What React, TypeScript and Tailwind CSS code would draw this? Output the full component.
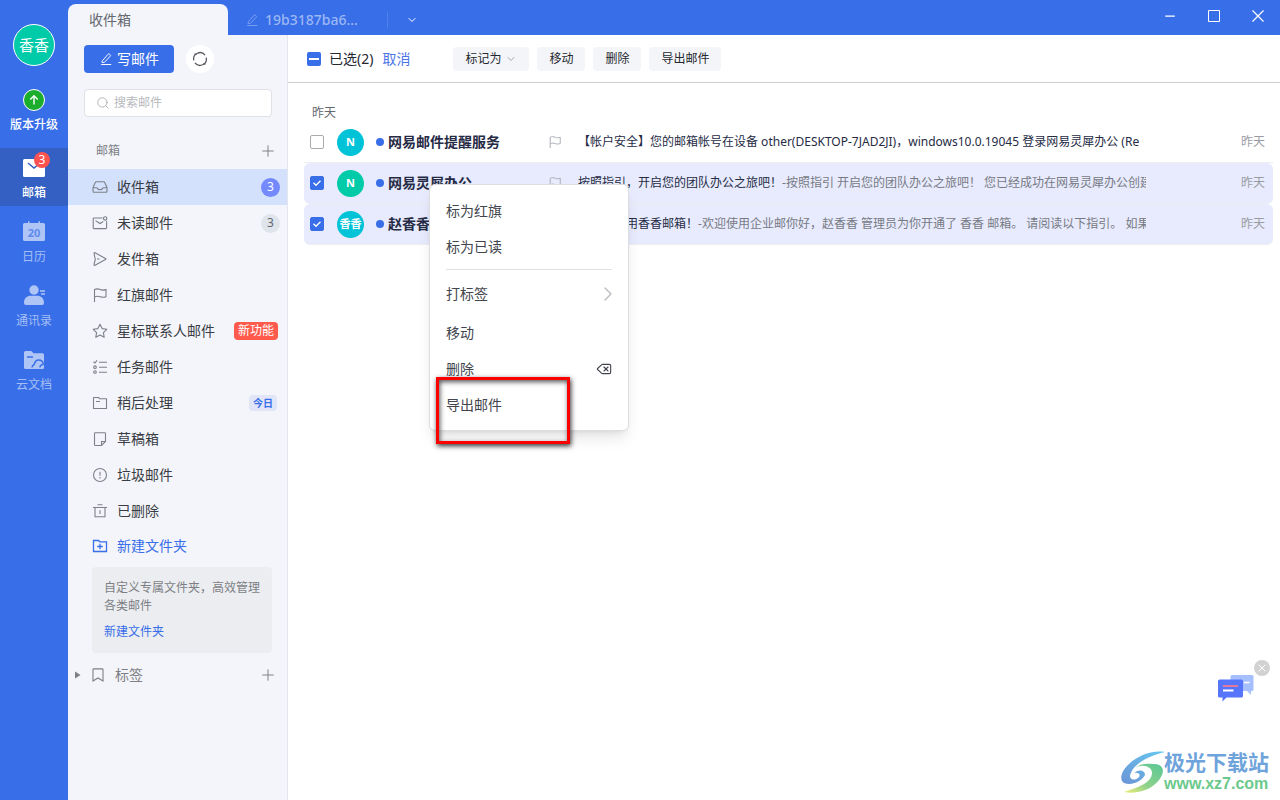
import { useState, type ReactNode } from "react";
import { ChevronDown, ChevronRight, Plus, X, Minus, Search, Delete } from "lucide-react";

type IconProps = { className?: string };

function Line({ className = "size-4", children }: IconProps & { children: ReactNode }) {
  return (
    <svg
      viewBox="0 0 16 16"
      className={`shrink-0 ${className}`}
      fill="none"
      stroke="currentColor"
      strokeWidth="1.1"
      aria-hidden="true"
    >
      {children}
    </svg>
  );
}

const PenIcon = ({ className }: IconProps) => (
  <Line className={className}>
    <path d="M3.5 10.5 10.3 2.6a1.2 1.2 0 0 1 1.8 0l.6.5a1.2 1.2 0 0 1 0 1.8L6 12H3.5zM2.5 14.3h11.5" />
  </Line>
);

const FlagIcon = ({ className }: IconProps) => (
  <Line className={className}>
    <path d="M2.5 15V2.6c2-1 4-.8 5.800 0s3.600.6 5.700 0v7.200c-2.100.7-4 .7-5.800 0s-3.700-.8-5.700.2" />
  </Line>
);

const icons: Record<string, ReactNode> = {
  inbox: (
    <Line>
      <path d="M1 8.700 3.200 3.500Q3.500 2.700 4.500 2.700h7q1 0 1.300.8L15 8.700v3.600q0 1-1 1H2q-1 0-1-1zM1 8.700h3.600q.5 0 .7.500.6 1.500 2.700 1.500t2.700-1.500q.2-.5.7-.5H15" />
    </Line>
  ),
  unread: (
    <Line>
      <path d="M10.500 3H2q-.8 0-.8.800v9q0 .8.800.8h11.800q.8 0 .8-.8V6.300M3.500 5.600 8 8.500l3.200-2" />
      <circle cx="13.200" cy="3.400" r="1.700" />
    </Line>
  ),
  sent: (
    <Line>
      <path d="M2 2.300q0-1 1-.5l10.500 5.600q1 .6 0 1.100L3 14.200q-1 .5-1-.5l1.300-5.200zM5 8h2.500" strokeLinejoin="round" />
    </Line>
  ),
  flag: <FlagIcon />,
  star: (
    <Line>
      <path d="m8 1.300 2.100 4.300 4.700.7-3.400 3.300.8 4.700L8 12l-4.200 2.300.8-4.700L1.200 6.300l4.700-.7z" strokeLinejoin="round" />
    </Line>
  ),
  task: (
    <Line>
      <path d="M7 3.200h8M7 8.200h8M7 13.200h8M1.500 2.800 3 4l2-2.700" />
      <circle cx="3" cy="8.200" r="1.300" />
      <circle cx="3" cy="13" r="1.300" />
    </Line>
  ),
  later: (
    <Line>
      <path d="M1.500 13.500v-11h5l1.300 1.300h6.700v9.700zM4 6.500h4" strokeLinejoin="round" />
    </Line>
  ),
  draft: (
    <Line>
      <path d="M9.500 14.500H3.300q-.8 0-.8-.8V2.500q0-.8.800-.8h9.400q.8 0 .8.800v8zM9.500 14.500v-4h4" />
    </Line>
  ),
  spam: (
    <Line>
      <circle cx="8" cy="8" r="6.500" />
      <path d="M8 4.700v4.100M8 9.900v1.500" />
    </Line>
  ),
  trash: (
    <Line>
      <path d="M1 4.500h14M5.500 1.700h5M3 4.500v9.300h10V4.500M8 7.300v3.600" />
    </Line>
  ),
  newFolder: (
    <Line>
      <path d="M1.500 13.500v-11h5l1.300 1.300h6.700v9.700zM8 5.700v5.600M5.200 8.500h5.600" strokeWidth="1.3" />
    </Line>
  ),
  bookmark: (
    <Line>
      <path d="M3 14V2.700q0-.8.800-.8h8.400q.8 0 .8.800V14l-5-3z" />
    </Line>
  ),
};

interface Folder {
  icon: string;
  label: string;
  count?: number;
  tag?: "new" | "today";
}

const folders: Folder[] = [
  { icon: "inbox", label: "收件箱", count: 3 },
  { icon: "unread", label: "未读邮件", count: 3 },
  { icon: "sent", label: "发件箱" },
  { icon: "flag", label: "红旗邮件" },
  { icon: "star", label: "星标联系人邮件", tag: "new" },
  { icon: "task", label: "任务邮件" },
  { icon: "later", label: "稍后处理", tag: "today" },
  { icon: "draft", label: "草稿箱" },
  { icon: "spam", label: "垃圾邮件" },
  { icon: "trash", label: "已删除" },
];

const mails = [
  {
    avatar: "N",
    color: "bg-[#00c3d7]",
    sender: "网易邮件提醒服务",
    subject: "【帐户安全】您的邮箱帐号在设备 other(DESKTOP-7JAD2JI)，windows10.0.19045 登录网易灵犀办公 (Re",
    preview: "",
  },
  {
    avatar: "N",
    color: "bg-[#00cba8]",
    sender: "网易灵犀办公",
    subject: "按照指引，开启您的团队办公之旅吧！",
    preview: "-按照指引 开启您的团队办公之旅吧！ 您已经成功在网易灵犀办公创建",
  },
  {
    avatar: "香香",
    color: "bg-[#00c3d7]",
    sender: "赵香香",
    subject: "欢迎您使用香香邮箱！",
    preview: "-欢迎使用企业邮你好，赵香香 管理员为你开通了 香香 邮箱。 请阅读以下指引。 如果",
  },
];

function RailItem({ label, active, children }: { label: string; active?: boolean; children: ReactNode }) {
  return (
    <button
      className={`flex h-[58px] w-full flex-col items-center pt-2 text-[12px] leading-4 ${
        active ? "bg-[#345fc3] font-medium text-white" : "text-[#a5bff5]"
      }`}
    >
      <span className="relative mb-[7px] block">{children}</span>
      {label}
    </button>
  );
}

function Rail() {
  return (
    <nav className="flex w-[68px] shrink-0 flex-col items-center bg-[#386ee8]">
      <button className="mt-6 size-[42px] rounded-full border border-white bg-[#00cba8] text-[15px] text-white">
        香香
      </button>
      <button className="mt-[23px] flex flex-col items-center text-[12px] font-medium leading-4 text-white">
        <svg viewBox="0 0 22 22" className="mb-1.5 size-[22px]" aria-hidden="true">
          <circle cx="11" cy="11" r="10.500" fill="#1bad2c" stroke="#fff" />
          <path d="M11 15.500V7M7.300 10.500 11 6.800l3.700 3.700" fill="none" stroke="#fff" strokeWidth="1.400" />
        </svg>
        版本升级
      </button>
      <div className="mt-[15px] flex w-full flex-col gap-1.5">
        <RailItem label="邮箱" active>
          <svg viewBox="0 0 22 22" className="size-[22px]" aria-hidden="true">
            <rect y="3" width="22" height="18" rx="1.500" fill="#fff" />
            <path d="m5 7 6 5 6-5" fill="none" stroke="#345fc3" strokeWidth="1.500" />
          </svg>
          <span className="absolute -top-1 left-[11px] flex size-4 items-center justify-center rounded-full bg-[#fc5250] text-[12px] font-normal">
            3
          </span>
        </RailItem>
        <RailItem label="日历">
          <svg viewBox="0 0 22 22" className="size-[22px]" aria-hidden="true">
            <path d="M1.500 3H5V1.300h1.500V3h9V1.300H17V3h3.500Q22 3 22 4.500v15q0 1.500-1.500 1.500h-19Q0 21 0 19.500v-15Q0 3 1.500 3" fill="#afc5f6" />
            <text x="11" y="16.500" textAnchor="middle" fontSize="11" fontWeight="700" fill="#5f8bee">20</text>
          </svg>
        </RailItem>
        <RailItem label="通讯录">
          <svg viewBox="0 0 22 22" className="size-[22px]" fill="#afc5f6" aria-hidden="true">
            <circle cx="11" cy="6" r="4.700" />
            <path d="M1 19c0-5 3-7.200 7-7.200h6c4 0 7 2.200 7 7.200q0 2-2 2H3q-2 0-2-2M17 6.300h5v1.400h-5zM18 9.300h4v1.400h-4z" />
          </svg>
        </RailItem>
        <RailItem label="云文档">
          <svg viewBox="0 0 22 22" className="size-[22px]" aria-hidden="true">
            <path d="M1 4.500Q1 3 2.500 3h5.800l2.200 2.300h9Q21 5.300 21 6.800v12.700q0 1.500-1.500 1.500h-17Q1 21 1 19.500z" fill="#afc5f6" />
            <path d="M4 9h6" stroke="#386ee8" strokeWidth="1.500" />
            <path d="M9 19.500c0-1.500.8-2.500 2.200-3 .6-2.700 2.300-4.500 4.500-4.500 2.400 0 4.300 1.700 4.800 4.500M17 19.500c0-1.800 1.200-3 3.500-3" fill="none" stroke="#386ee8" strokeWidth="1.400" />
          </svg>
        </RailItem>
      </div>
    </nav>
  );
}

function TitleBar() {
  return (
    <header className="flex h-[35px] shrink-0 items-end bg-[#386ee8]">
      <button className="h-[31px] w-40 rounded-t-lg bg-[#f3f5fa] pl-[21px] text-left text-[14px] text-[#65686f]">
        收件箱
      </button>
      <div className="flex h-[31px] items-center">
        <button className="flex w-[159px] items-center pl-[17px] text-[14px] text-[#9bb7f4]">
          <PenIcon className="mr-1.5 size-[14px] text-[#7ba0f0]" />
          <span className="font-medium">19b3187ba6...</span>
        </button>
        <span className="h-4 w-px bg-[#4f80eb]" />
        <button aria-label="更多标签页" className="ml-[18px] text-white">
          <ChevronDown className="size-3" />
        </button>
      </div>
      <div className="ml-auto flex h-full items-center gap-8 pb-1 pr-4 text-white">
        <button aria-label="最小化"><Minus className="size-3 scale-125" strokeWidth={2} /></button>
        <button aria-label="最大化">
          <svg viewBox="0 0 12 12" className="size-3" fill="none" stroke="currentColor" aria-hidden="true">
            <path d="M.5.5h11v11H.5z" />
          </svg>
        </button>
        <button aria-label="关闭">
          <svg viewBox="0 0 12 12" className="size-3" fill="none" stroke="currentColor" strokeWidth="1.200" aria-hidden="true">
            <path d="m.5.5 11 11M11.500.5l-11 11" />
          </svg>
        </button>
      </div>
    </header>
  );
}

function Sidebar() {
  return (
    <aside className="flex w-[220px] shrink-0 flex-col border-r border-[#e4e6ed] bg-[#f3f5fa]">
      <div className="mt-2.5 flex items-center gap-3 pl-4">
        <button className="flex h-7 w-[90px] items-center justify-center gap-1 rounded bg-[#386ee8] text-[14px] leading-5 text-white">
          <PenIcon className="size-[14px]" />
          写邮件
        </button>
        <button aria-label="刷新" className="flex size-7 items-center justify-center rounded-full bg-white text-[#55585f]">
          <Line>
            <path d="M1.800 9.300A6.300 6.300 0 0 1 13 4.200M14.200 6.700A6.300 6.300 0 0 1 3 11.800M4.800 3.300 2.500 3M11.200 12.700l2.300.3" strokeWidth="1.300" />
          </Line>
        </button>
      </div>
      <label className="ml-4 mr-[15px] mt-4 flex h-7 items-center rounded border border-[#dfe1e7] bg-white pl-[11px]">
        <Search className="mr-1 size-[14px] text-[#a8aaad]" strokeWidth={1.5} />
        <input
          type="search"
          aria-label="搜索邮件"
          placeholder="搜索邮件"
          className="min-w-0 flex-1 text-[12px] outline-none placeholder:text-[#b7b9bd]"
        />
      </label>
      <div className="mt-4 flex h-9 items-center justify-between pl-7 pr-2.5 text-[12px] text-[#7d7f84]">
        邮箱
        <button aria-label="新建邮箱文件夹"><Plus className="size-[18px]" strokeWidth={1.3} /></button>
      </div>
      <ul>
        {folders.map((folder, index) => (
          <li key={folder.label}>
            <button
              className={`flex h-9 w-full items-center pl-6 pr-[7px] text-[14px] leading-5 text-[#3a3d45] ${
                index === 0 ? "bg-[#d4e1fd]" : ""
              }`}
            >
              <span className="mr-[9px] text-[#7d8088]">{icons[folder.icon]}</span>
              {folder.label}
              {folder.count && (
                <span
                  className={`ml-auto flex size-[19px] items-center justify-center rounded-full text-[12px] ${
                    index === 0 ? "bg-[#7389fc] text-white" : "bg-[#e0e5ec] text-[#62666f]"
                  }`}
                >
                  {folder.count}
                </span>
              )}
              {folder.tag === "new" && (
                <span className="ml-auto mr-0.5 rounded bg-[#fe5b4c] px-1 text-[12px] leading-[18px] text-white">
                  新功能
                </span>
              )}
              {folder.tag === "today" && (
                <span className="ml-auto mr-[3px] rounded-sm bg-[#e0e6f8] px-1 text-[10px] font-bold leading-4 text-[#386ee8]">
                  今日
                </span>
              )}
            </button>
          </li>
        ))}
      </ul>
      <button className="flex h-[34px] items-center gap-[9px] pl-6 text-[14px] leading-5 text-[#386ee8]">
        {icons.newFolder}
        新建文件夹
      </button>
      <section className="ml-6 mr-[15px] mt-1 rounded bg-[#ebedf1] px-3 py-3 text-[12px] leading-[18px] text-[#7d7f84]">
        <p className="-mr-1">自定义专属文件夹，高效管理各类邮件</p>
        <a href="#new-folder" className="mt-2 block text-[#386ee8]">新建文件夹</a>
      </section>
      <div className="mt-1 flex h-9 items-center pl-[7px] pr-2.5 text-[14px] leading-5 text-[#7d7f84]">
        <svg viewBox="0 0 6 8" className="mr-[9px] h-2 w-1.5" fill="currentColor" aria-hidden="true">
          <path d="M0 0.500 5.500 4 0 7.500z" />
        </svg>
        {icons.bookmark}
        <span className="ml-[9px]">标签</span>
        <button aria-label="新建标签" className="ml-auto"><Plus className="size-[18px]" strokeWidth={1.3} /></button>
      </div>
    </aside>
  );
}

function ToolButton({ children }: { children: ReactNode }) {
  return (
    <button className="flex h-6 items-center gap-1 rounded bg-[#f4f5f8] px-3 text-[12px] text-[#25282f]">
      {children}
    </button>
  );
}

function Toolbar() {
  return (
    <div className="flex h-12 shrink-0 items-center border-b border-[#cfcfcf] pl-[19px] text-[14px] leading-5">
      <label className="flex items-center text-[#25282f]">
        <span className="relative mr-2 block size-[14px]">
          <input type="checkbox" defaultChecked className="block size-[14px] appearance-none rounded-xs bg-[#386ee8]" />
          <span className="pointer-events-none absolute inset-x-0.5 top-1.5 h-0.5 bg-white" />
        </span>
        已选(2)
      </label>
      <button className="ml-[9px] text-[#4b74e6]">取消</button>
      <div className="ml-[43px] flex gap-2">
        <ToolButton>
          标记为
          <ChevronDown className="size-3 text-[#a5a7ab]" />
        </ToolButton>
        <ToolButton>移动</ToolButton>
        <ToolButton>删除</ToolButton>
        <ToolButton>导出邮件</ToolButton>
      </div>
    </div>
  );
}

function MailList() {
  const [selected, setSelected] = useState([false, true, true]);

  const toggle = (index: number) => {
    setSelected(selected.map((value, i) => (i === index ? !value : value)));
  };

  return (
    <div className="pl-4 pr-[7px] pt-5">
      <h2 className="pl-2 text-[12px] leading-[19px] text-[#65686f]">昨天</h2>
      <ul>
        {mails.map((mail, index) => (
          <li
            key={mail.sender}
            className={`flex h-[41px] items-center border-b border-[#eceef2] pl-1.5 pr-2 text-[#262b45] ${
              selected[index] ? "rounded-md bg-[#e7ebfd]" : ""
            }`}
          >
            <span className="relative mr-[13px] block size-[14px]">
              <input
                type="checkbox"
                aria-label={mail.sender}
                checked={selected[index]}
                onChange={() => toggle(index)}
                className="block size-[14px] appearance-none rounded-xs border border-[#a9abae] bg-white checked:border-[#386ee8] checked:bg-[#386ee8]"
              />
              {selected[index] && (
                <svg viewBox="0 0 14 14" className="pointer-events-none absolute inset-0" fill="none" stroke="#fff" strokeWidth="1.300" aria-hidden="true">
                  <path d="m3.500 6.800 2.500 2.500 4.500-4.500" />
                </svg>
              )}
            </span>
            <span className={`flex size-[27px] shrink-0 items-center justify-center rounded-full text-[11px] font-bold text-white ${mail.color}`}>
              {mail.avatar}
            </span>
            <span className="ml-3 size-2 shrink-0 rounded-full bg-[#386ee8]" />
            <span className="ml-1 w-40 shrink-0 text-[14px] font-bold leading-5">{mail.sender}</span>
            <button aria-label="标记红旗" className="w-[30px] shrink-0 text-[#aaadb5]">
              <FlagIcon className="size-[14px]" />
            </button>
            <p className="min-w-0 flex-1 overflow-hidden whitespace-nowrap text-[12px] leading-5">
              {mail.subject}
              <span className="text-[#777a84]">{mail.preview}</span>
            </p>
            <time className="ml-[95px] shrink-0 text-[12px] leading-5 text-[#9a9ca2]">昨天</time>
          </li>
        ))}
      </ul>
    </div>
  );
}

function ContextMenu() {
  const item = "flex h-9 w-full items-center justify-between px-4 text-left";
  return (
    <div
      role="menu"
      className="absolute left-[429px] top-[184px] w-[200px] rounded-md border border-[#dcdde1] bg-white pb-[7px] pt-2 text-[14px] leading-5 text-[#42454d] shadow-lg"
    >
      <button role="menuitem" className={item}>标为红旗</button>
      <button role="menuitem" className={item}>标为已读</button>
      <hr className="mx-4 mb-1.5 mt-1 border-[#e0e1e4]" />
      <button role="menuitem" className={item}>
        打标签
        <ChevronRight className="-mr-2 size-6 text-[#b9bbc0]" strokeWidth={1.4} />
      </button>
      <button role="menuitem" className={`mt-[3px] ${item}`}>移动</button>
      <button role="menuitem" className={item}>
        删除
        <Delete className="size-4 text-[#42454d]" strokeWidth={1.7} />
      </button>
      <button role="menuitem" className={item}>导出邮件</button>
    </div>
  );
}

function ChatWidget() {
  return (
    <div className="absolute bottom-[98px] right-2.5">
      <button aria-label="在线客服" className="mr-4 block">
        <svg viewBox="0 0 36 28" className="h-7 w-9" aria-hidden="true">
          <path d="M14 1h20q1.500 0 1.500 1.500v13q0 1.500-1.500 1.500h-1v4l-4-4H14q-1.500 0-1.500-1.500v-13Q12.500 1 14 1" fill="#a6c0ff" />
          <path d="M26 8.500h5.500" stroke="#fff" strokeWidth="1.500" />
          <path d="M1.500 5.500h22q1.500 0 1.500 1.500v15q0 1.500-1.500 1.500H8.500l-4 4V23.500h-3Q0 23.500 0 22V7q0-1.500 1.500-1.500" fill="#5775fb" />
          <path d="M5 12h15" stroke="#e17a9d" strokeWidth="2" />
          <path d="M5 16.500h10.500" stroke="#fff" strokeWidth="2" />
        </svg>
      </button>
      <button
        aria-label="关闭客服"
        className="absolute -top-3.5 right-0 flex size-4 items-center justify-center rounded-full bg-[#d2d2d2] text-white"
      >
        <X className="size-3" />
      </button>
    </div>
  );
}

function SiteMark() {
  return (
    <a href="#site" className="absolute bottom-1.5 right-[11px] flex items-center">
      <svg viewBox="0 0 44 44" className="h-11 w-11" aria-hidden="true">
        <defs>
          <linearGradient id="swirl-blue" x1="1" y1="0" x2="0" y2="1">
            <stop offset="0" stopColor="#65c8f0" />
            <stop offset="1" stopColor="#6c94d6" />
          </linearGradient>
          <linearGradient id="swirl-green" x1="1" y1="0" x2="0" y2="1">
            <stop offset="0" stopColor="#58c795" />
            <stop offset="0.600" stopColor="#8fd28a" />
            <stop offset="1" stopColor="#f0ee79" />
          </linearGradient>
        </defs>
        <path
          d="M44 2C30 0 17 6 8 14C0 21-2 30 3 33C10 36 20 32 24 25C24 20 18 19 13 23C17 22 20 24 18 27C14 31 9 30 9 26C11 15 26 6 44 2"
          fill="url(#swirl-blue)"
        />
        <path
          d="M14 18C22 13 32 17 31 24C30 32 19 37 3 42C20 45 36 37 41 25C44 17 39 14 32 14C25 13 18 14 14 18"
          fill="url(#swirl-green)"
        />
      </svg>
      <span className="-ml-px block">
        <span className="block text-[21px] font-bold leading-6 text-[#6ea3db]">极光下载站</span>
        <span className="block font-['Liberation_Sans'] text-[16px] font-bold leading-5 text-[#6bc98c]">
          www.xz7.com
        </span>
      </span>
    </a>
  );
}

export default function App() {
  return (
    <div className="relative flex h-screen overflow-hidden bg-white font-['Noto_Sans','Noto_Sans_CJK_SC',sans-serif]">
      <Rail />
      <div className="flex min-w-0 flex-1 flex-col">
        <TitleBar />
        <div className="flex min-h-0 flex-1">
          <Sidebar />
          <main className="min-w-0 flex-1">
            <Toolbar />
            <MailList />
          </main>
        </div>
      </div>
      <ContextMenu />
      {/* highlight around the export entry */}
      <div className="pointer-events-none absolute left-[436px] top-[377px] h-[67px] w-[134px] border-3 border-[#fd0000] shadow-[1px_2px_5px_#333,inset_1px_2px_5px_#555]" />
      <ChatWidget />
      <SiteMark />
    </div>
  );
}
